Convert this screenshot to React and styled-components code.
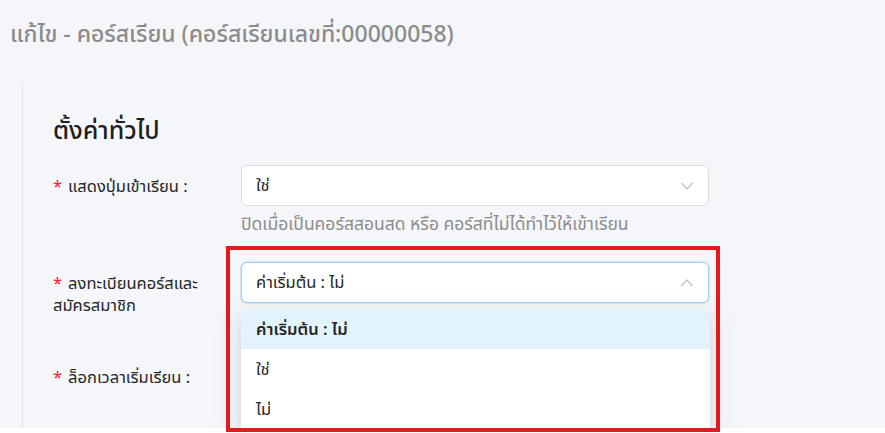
import React from 'react'
import styled, { createGlobalStyle } from 'styled-components'

const GlobalStyle = createGlobalStyle`
  html, body {
    margin: 0;
    padding: 0;
    background: #ffffff;
  }
  body {
    font-family: 'Noto Sans', 'Noto Sans Thai', 'DejaVu Sans', sans-serif;
    color: #262626;
  }
`

const Page = styled.div`
  width: 885px;
  height: 428px;
  background: #f5f6fa;
  overflow: hidden;
`

const PageTitle = styled.h1`
  margin: 0;
  padding: 18px 0 0 10px;
  height: 83px;
  box-sizing: border-box;
  font-size: 23px;
  font-weight: 500;
  line-height: 30px;
  color: #8c8c8c;
`

const Panel = styled.div`
  margin-left: 22px;
  height: 345px;
  border-left: 1px solid #e3e4e8;
  padding: 30px 0 0 30px;
  box-sizing: border-box;
`

const SectionTitle = styled.h2`
  margin: 0 0 20px;
  font-size: 25px;
  font-weight: 500;
  line-height: 32px;
  color: #1f1f1f;
`

const Row = styled.div`
  display: grid;
  grid-template-columns: 188px 468px;
  margin-bottom: ${p => p.gap || 24}px;
`

const Label = styled.label`
  font-size: 16.5px;
  line-height: 22px;
  padding-top: ${p => p.top || 10}px;
  color: #262626;
`

const Required = styled.span`
  color: #f5222d;
  margin-right: 6px;
`

const Field = styled.div`
  position: relative;
`

const SelectBox = styled.div`
  height: 41px;
  box-sizing: border-box;
  display: flex;
  align-items: center;
  justify-content: space-between;
  padding: 0 14px;
  background: #ffffff;
  border: 1px solid ${p => p.open ? '#a7cdf2' : '#dcdde2'};
  box-shadow: ${p => p.open ? '0 0 0 1px #d3e6f8' : 'none'};
  border-radius: 6px;
  font-size: 16.5px;
  color: #262626;
`

const Hint = styled.div`
  margin-top: 6px;
  font-size: 17.5px;
  line-height: 22px;
  color: #8c8c8c;
`

const Menu = styled.div`
  position: absolute;
  top: 47px;
  left: 0;
  width: 469px;
  background: #ffffff;
  border-radius: 4px;
  box-shadow: 0 3px 6px -4px rgba(0,0,0,.12), 0 6px 16px 0 rgba(0,0,0,.08), 0 9px 28px 8px rgba(0,0,0,.05);
  overflow: hidden;
  z-index: 2;
`

const Option = styled.div`
  height: 40px;
  display: flex;
  align-items: center;
  padding-left: 15px;
  padding-right: 15px;
  font-size: 16.5px;
  font-weight: ${p => p.$selected ? 600 : 400};
  background: ${p => p.$selected ? '#e3f3fc' : '#ffffff'};
  color: #262626;
`

const Highlight = styled.div`
  position: absolute;
  left: 226px;
  top: 246px;
  width: 494px;
  height: 186px;
  box-sizing: border-box;
  border: 4px solid #e3191e;
  pointer-events: none;
  z-index: 3;
`

const Chevron = ({ up }) => (
  <svg width="14" height="14" viewBox="0 0 14 14" fill="none" stroke="#bfbfbf" strokeWidth="1.2">
    {up ? <path d="M1.5 10 L7 4 L12.5 10" /> : <path d="M1.5 4 L7 10 L12.5 4" />}
  </svg>
)

const App = () => (
  <>
    <GlobalStyle />
    <Page>
      <PageTitle>แก้ไข - คอร์สเรียน (คอร์สเรียนเลขที่:00000058)</PageTitle>
      <Panel>
        <SectionTitle>ตั้งค่าทั่วไป</SectionTitle>

        <Row gap={28}>
          <Label><Required>*</Required>แสดงปุ่มเข้าเรียน :</Label>
          <Field>
            <SelectBox>ใช่<Chevron /></SelectBox>
            <Hint>ปิดเมื่อเป็นคอร์สสอนสด หรือ คอร์สที่ไม่ได้ทำไว้ให้เข้าเรียน</Hint>
          </Field>
        </Row>

        <Row gap={40}>
          <Label><Required>*</Required>ลงทะเบียนคอร์สและ<br />สมัครสมาชิก</Label>
          <Field>
            <SelectBox open>ค่าเริ่มต้น : ไม่<Chevron up /></SelectBox>
            <Menu>
              <Option $selected>ค่าเริ่มต้น : ไม่</Option>
              <Option>ใช่</Option>
              <Option>ไม่</Option>
            </Menu>
          </Field>
        </Row>

        <Row>
          <Label top={0}><Required>*</Required>ล็อกเวลาเริ่มเรียน :</Label>
          <Field />
        </Row>
      </Panel>
    </Page>
    <Highlight />
  </>
)

export default App
